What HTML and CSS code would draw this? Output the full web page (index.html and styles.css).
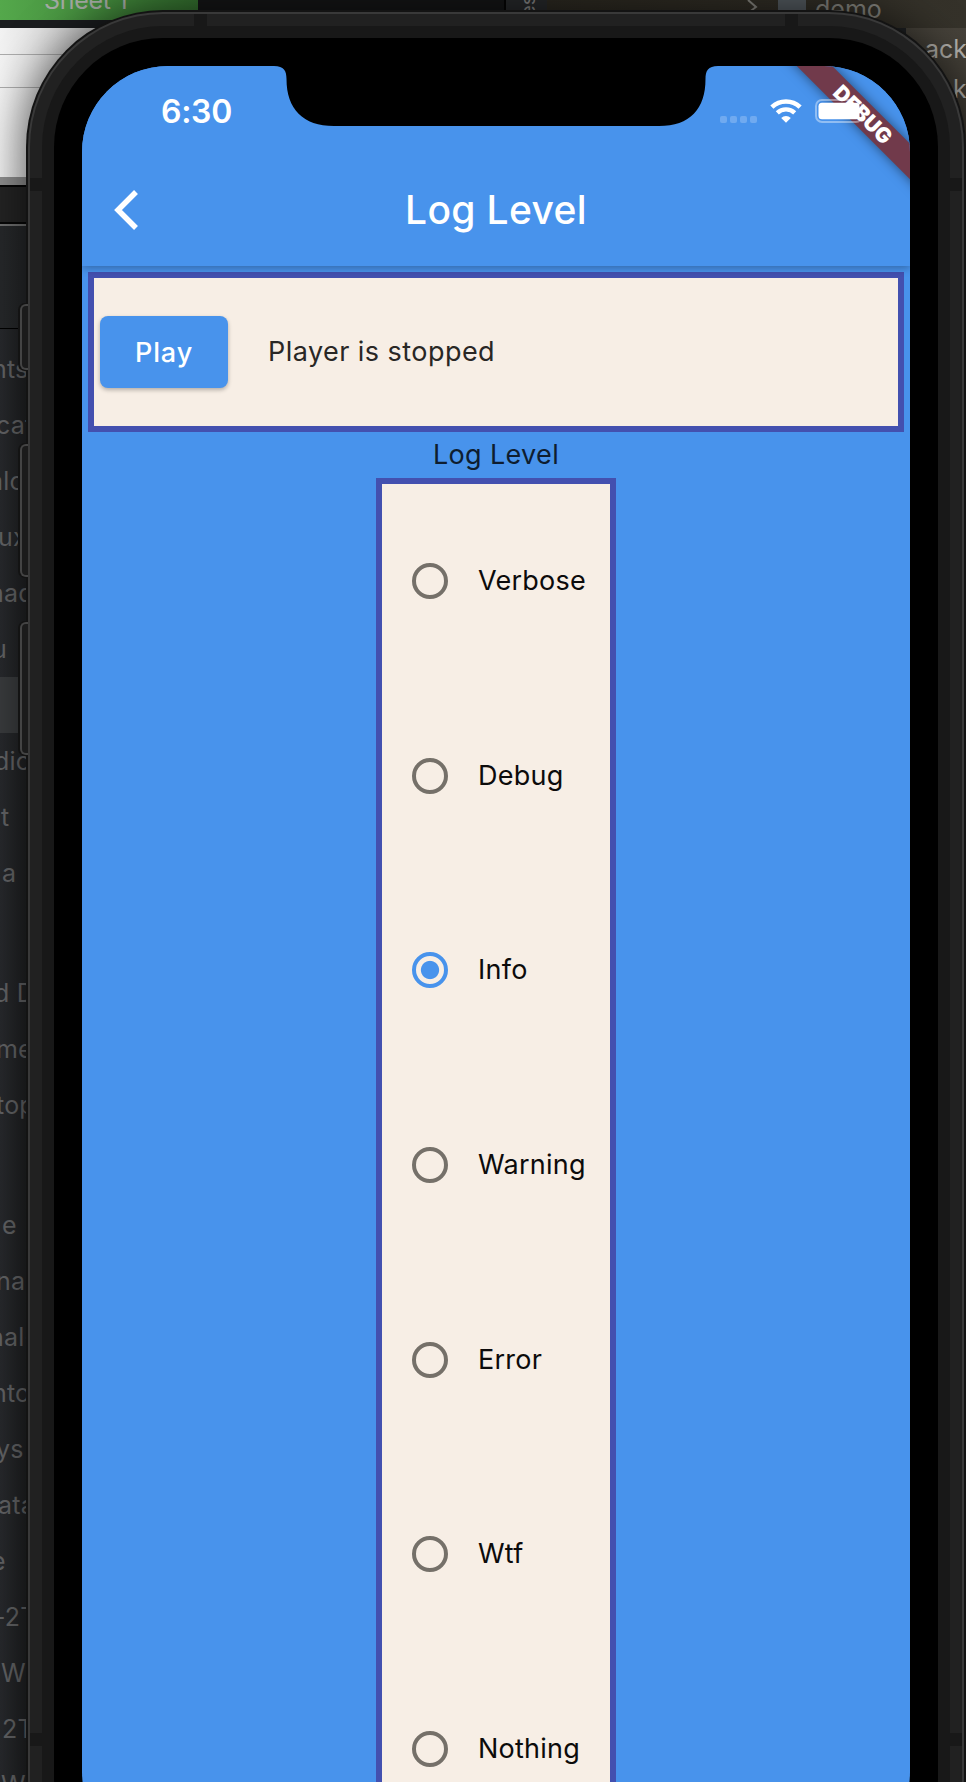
FILE: index.html
```html
<!DOCTYPE html>
<html lang="en">
<head>
<meta charset="utf-8">
<title>Log Level</title>
<link rel="stylesheet" href="styles.css">
</head>
<body>
<div class="desktop" aria-hidden="true">
  <div class="top-strip">
    <div class="sheet-tab">Sheet 1</div>
    <div class="dark-tab"></div>
    <div class="side-tab"><span>es</span></div>
    <div class="path-bar">
      <svg class="path-chevron" width="12" height="20" viewBox="0 0 12 20"><path d="M1 0 L9 7 L1 13"/></svg>
      <i class="path-icon"></i><span>demo</span>
    </div>
  </div>
  <div class="columns">
    <div class="left">
      <div class="paper"><i></i><i></i></div>
      <div class="toolbar"></div>
      <div class="panel-head"></div>
      <div class="list">
        <p class="in8">nts</p><p class="in4">cat</p><p class="in11">alo</p><p>ux</p><p class="in11">nad</p><p class="in8">u</p><p class="selected"></p><p class="in6">dic</p><p class="out1">t</p><p class="out2">a</p>
        <p class="group"></p><p class="in6">d D</p><p class="in4">me</p><p class="in4">top</p>
        <p class="group"></p><p class="out2">e</p><p class="in4">na</p><p class="in11">nal-</p><p class="in8">nto</p><p class="in4">ys</p><p>ata</p><p class="in9">e</p><p class="in6">-2T</p><p class="out1">Wi</p><p class="out2">2T</p><p class="out1">Wi</p>
      </div>
    </div>
    <div class="right"><p>ack</p><p class="tail">k</p></div>
  </div>
</div>

<div class="phone">
  <i class="key key-mute"></i><i class="key key-up"></i><i class="key key-down"></i>
  <div class="rim">
    <i class="gap gap-t1"></i><i class="gap gap-t2"></i><i class="gap gap-l1"></i><i class="gap gap-l2"></i><i class="gap gap-r1"></i><i class="gap gap-r2"></i>
    <div class="band"><div class="bezel">
      <div class="screen">
        <div class="appbar">
          <div class="status">
            <span class="clock">6:30</span>
            <span class="cell"><i></i><i></i><i></i><i></i></span>
            <svg class="wifi" width="32" height="24" viewBox="0 0 32 24"><path d="M1.900 8.100 A20.500 20.500 0 0 1 30.100 8.100" stroke-width="4.600"/><path d="M7.300 13.900 A12.500 12.500 0 0 1 24.700 13.900" stroke-width="4.400"/><path class="wedge" d="M16 23.800 L11.200 18.900 A7 7 0 0 1 20.800 18.900 Z"/></svg>
          </div>
          <div class="nav">
            <svg class="back" width="26" height="42" viewBox="0 0 26 42"><path d="M22 3 L4 21 L22 39"/></svg>
            <h1>Log Level</h1>
          </div>
        </div>
        <div class="content">
          <div class="player"><button class="play">Play</button><span class="state">Player is stopped</span></div>
          <div class="caption">Log Level</div>
          <div class="levels">
            <label><i class="radio"></i><span>Verbose</span></label>
            <label><i class="radio"></i><span>Debug</span></label>
            <label><i class="radio on"></i><span>Info</span></label>
            <label><i class="radio"></i><span>Warning</span></label>
            <label><i class="radio"></i><span>Error</span></label>
            <label><i class="radio"></i><span>Wtf</span></label>
            <label><i class="radio"></i><span>Nothing</span></label>
          </div>
        </div>
        <svg class="notch" width="444" height="61" viewBox="0 0 444 61"><path d="M0 0 V1 C10 1 12.500 6 12.500 14 C12.500 44 29 61 60 61 H385 C416 61 431.500 44 431.500 14 C431.500 6 434 1 444 1 V0 Z"/></svg>
        <div class="banner">DEBUG</div>
        <svg class="battery" width="54" height="24" viewBox="0 0 54 24"><rect class="shell" x="1" y="1" width="46" height="22" rx="6"/><rect class="charge" x="3.500" y="3.700" width="41" height="16.600" rx="3.500"/></svg>
      </div>
    </div></div>
  </div>
</div>
</body>
</html>
```

FILE: styles.css
```css
* { box-sizing: border-box; }
html, body { margin: 0; height: 1782px; overflow: hidden; background: #1f2123; }
body { position: relative; width: 966px; font-family: Inter, "Liberation Sans", sans-serif; }
p { margin: 0; }

/* windows behind the device */
.desktop { position: absolute; inset: 0; overflow: hidden; color: #646567; font-size: 25px; }
.top-strip { display: flex; height: 28px; background: #1b1d1f; }
.sheet-tab { width: 198px; height: 20px; padding-left: 44px; overflow: hidden; background: linear-gradient(90deg, #54a84b, #34702f); color: #a5aba4; font-size: 25px; line-height: 1px; letter-spacing: -.3px; }
.dark-tab { width: 308px; background: #141516; border-right: 2px solid #050505; }
.side-tab { width: 41px; background: #26282a; padding: 0 0 0 12px; }
.side-tab span { display: block; writing-mode: vertical-rl; transform: rotate(180deg); height: 21px; width: 20px; margin-top: -4px; line-height: 20px; font-size: 20px; color: #808080; }
.path-bar { flex: 1; display: flex; background: linear-gradient(90deg, #2b2820, #35322a); font-size: 25px; line-height: 18px; color: #85847e; }
.path-chevron { margin-left: 200px; fill: none; stroke: #85847e; stroke-width: 2; }
.path-icon { width: 28px; height: 14px; background: #535a5f; margin: 0 9px 0 19px; }
.columns { display: flex; justify-content: space-between; }
.left { width: 200px; }
.paper { height: 149px; background: linear-gradient(90deg, #f2f2f2, #e6e6e6 30px, #c8c8c8 100px); padding-top: 26px; }
.paper i { display: block; height: 33px; border-top: 1px solid #aaa; }
.toolbar { height: 47px; background: #242424; border-top: 8px solid #909090; border-bottom: 2px solid #070707; box-shadow: inset 0 2px #050505; }
.panel-head { height: 105px; background: linear-gradient(90deg, #27292b, #1f2123); border-top: 2px solid #707171; border-bottom: 1px solid #000; }
.list { padding-top: 12px; height: 1453px; width: 28px; background: linear-gradient(90deg, #282a2d, #212224); overflow: hidden; }
.list p { height: 56px; line-height: 56px; white-space: pre; letter-spacing: .2px; text-indent: -2px; }
.list .in4 { text-indent: -4px; }
.list .in6 { text-indent: -6px; }
.list .in8 { text-indent: -8px; }
.list .in9 { text-indent: -9px; }
.list .in11 { text-indent: -11px; }
.list .out1 { text-indent: 1px; }
.list .out2 { text-indent: 2px; }
.list .group { height: 64px; }
.list .selected { background: #3a3c3e; }
.right { width: 60px; height: 1754px; padding: 1px 0 0 19px; background: linear-gradient(180deg, #46423a, #3c3830 130px, #1a1b1c 170px); color: #b3b1ac; line-height: 40px; }
.right .tail { padding-left: 28px; }

/* device frame */
.phone { position: relative; width: 936px; height: 1900px; margin: 12px 0 0 28px; padding: 2px; border-radius: 135px; background: #393939; box-shadow: 0 0 0 2px #131313, 0 0 44px 4px rgba(0,0,0,.6); }
.rim { position: relative; height: 1896px; padding: 12px; border-radius: 133px; background: #212121; }
.band { height: 1872px; padding: 12px; border-radius: 121px; background: #181818; }
.bezel { height: 1848px; padding: 28px; border-radius: 109px; background: #000; }
.key { position: absolute; left: -8px; width: 8px; border: 2px solid #444; border-right: 0; border-radius: 6px 0 0 6px; background: #1b1b1b; box-shadow: -1px 0 0 1px #131313; }
.key-mute { top: 292px; height: 66px; }
.key-up { top: 432px; height: 133px; }
.key-down { top: 610px; height: 133px; }
.gap { position: absolute; background: #181818; width: 12px; height: 13px; }
.gap-t1, .gap-t2 { width: 13px; height: 12px; top: 0; }
.gap-t1 { left: 164px; }
.gap-t2 { left: 755px; }
.gap-l1, .gap-r1 { top: 164px; }
.gap-l2, .gap-r2 { top: 1719px; }
.gap-l1, .gap-l2 { left: 0; }
.gap-r1, .gap-r2 { right: 0; }

/* app */
.screen { position: relative; display: flex; flex-direction: column; width: 828px; height: 1792px; border-radius: 86px; overflow: hidden; background: #4893ec; }
.appbar { position: relative; z-index: 1; height: 200px; background: #4893ec; box-shadow: 0 2px 8px rgba(0,0,0,.3); }
.status { display: flex; height: 88px; }
.clock { flex: none; width: 638px; padding: 26px 0 0 79px; color: #fff; font-size: 32px; line-height: 40px; font-weight: 600; letter-spacing: -.3px; }
.cell { flex: none; display: flex; gap: 3px; padding-top: 50px; width: 50px; }
.cell i { width: 7px; height: 7px; border-radius: 2px; background: rgba(255,255,255,.22); }
.wifi { flex: none; margin-top: 33px; fill: none; stroke: #fff; }
.wifi .wedge { fill: #fff; stroke: none; }
.nav { display: grid; grid-template-columns: 56px 1fr 56px; align-items: center; height: 112px; }
.back { margin-left: 32px; fill: none; stroke: #fff; stroke-width: 5.500; }
h1 { margin: 0; text-align: center; color: #fff; font-size: 39px; line-height: 48px; font-weight: 500; letter-spacing: .35px; }
.content { flex: 1; display: flex; flex-direction: column; align-items: center; padding: 6px; }
.player { display: flex; align-items: center; align-self: stretch; height: 160px; padding: 0 6px; border: 6px solid #4350af; background: #f7eee5; }
.play { width: 128px; height: 72px; padding: 0; border: 0; border-radius: 8px; background: #4893ec; color: #fff; font: 500 27px Inter, sans-serif; letter-spacing: .9px; box-shadow: 0 2px 4px rgba(0,0,0,.28); }
.state { margin-left: 40px; padding-bottom: 1px; color: #292725; font-size: 27px; letter-spacing: .45px; }
.caption { height: 46px; line-height: 45px; color: #0e1d30; font-size: 27px; letter-spacing: .35px; }
.levels { flex: 1; display: flex; flex-direction: column; width: 240px; border: 6px solid #4350af; background: #f7eee5; }
.levels label { flex: 1; display: flex; align-items: center; padding-left: 30px; color: #0c0b0b; font-size: 27px; letter-spacing: .25px; }
.levels span { padding-bottom: 1px; }
.radio { width: 36px; height: 36px; margin-right: 30px; border: 4px solid #757069; border-radius: 50%; }
.radio.on { border-color: #4893ec; background: radial-gradient(circle, #4893ec 8.600px, transparent 9.600px); }

/* overlays on the screen */
.notch { position: absolute; z-index: 2; left: 192px; top: -1px; fill: #000; }
.banner { position: absolute; z-index: 2; left: 641px; top: 36px; width: 280px; height: 25px; transform: rotate(45deg); background: #713a4b; color: #fff; font-size: 21px; line-height: 25px; font-weight: 900; text-align: center; box-shadow: 0 0 12px rgba(0,0,0,.5); }
.battery { position: absolute; z-index: 3; left: 733px; top: 33px; }
.battery .shell { fill: none; stroke: rgba(255,255,255,.4); stroke-width: 2; }
.battery .charge { fill: #fff; }
```
